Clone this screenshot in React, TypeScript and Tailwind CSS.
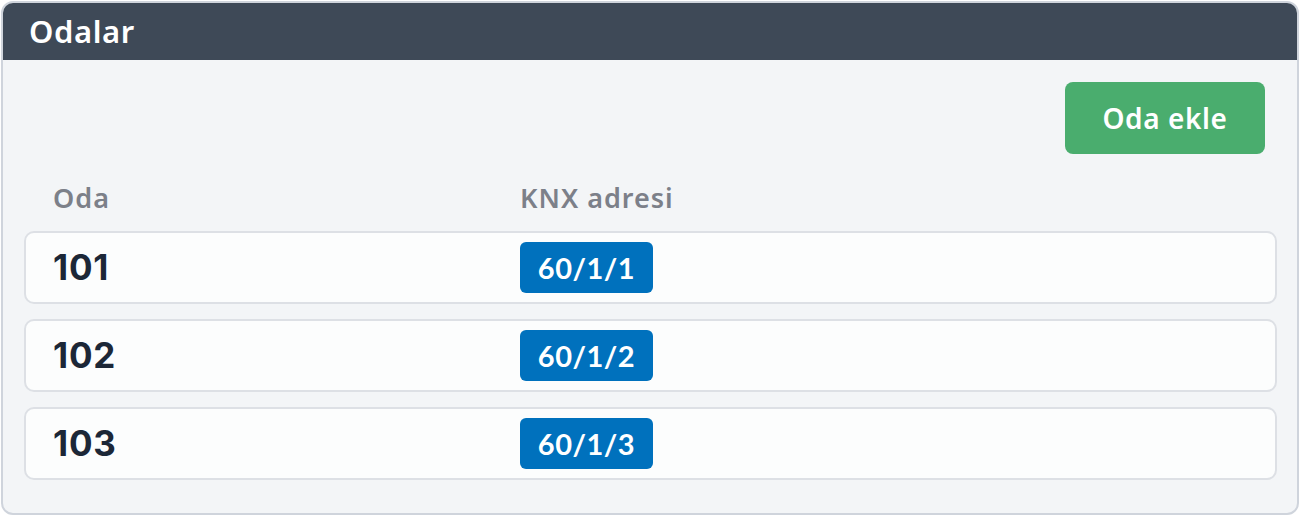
const rooms = [
  { name: "101", knx: "60/1/1" },
  { name: "102", knx: "60/1/2" },
  { name: "103", knx: "60/1/3" },
];

const App = () => {
  return (
    <div className="w-[1300px] h-[516px] p-px bg-white" style={{ fontFamily: "'Noto Sans', sans-serif" }}>
      <div className="h-[514px] rounded-[12px] border-2 border-[#cfd4dc] bg-[#f3f5f7] overflow-hidden flex flex-col">
        {/* Panel header */}
        <div className="h-[57px] shrink-0 bg-[#3e4957] flex items-center px-[26px]">
          <h2 className="text-white text-[31px] font-semibold tracking-[0.6px]">Odalar</h2>
        </div>

        <div className="flex-1 pl-[21px] pr-[20px] pt-[22px]">
          <div className="flex justify-end pr-[12px]">
            <button className="w-[200px] h-[72px] rounded-[8px] bg-[#4aad6e] text-white text-[28px] font-semibold tracking-[0.6px]">
              Oda ekle
            </button>
          </div>

          {/* Column labels */}
          <div className="grid grid-cols-[467px_1fr] px-[29px] mt-[24px] h-[40px] items-center text-[27px] font-semibold tracking-[1px] text-[#7c8089]">
            <span>Oda</span>
            <span>KNX adresi</span>
          </div>

          <div className="flex flex-col gap-[15px] mt-[13px]">
            {rooms.map((room) => (
              <div
                key={room.name}
                className="h-[73px] rounded-[10px] border-2 border-[#dde0e5] bg-[#fcfdfd] grid grid-cols-[467px_1fr] items-center px-[27px]"
              >
                <span className="text-[35px] font-bold text-[#1c2737] tracking-[0.8px]" style={{ fontFamily: "Inter, sans-serif" }}>
                  {room.name}
                </span>
                <div>
                  <span
                    className="inline-flex items-center justify-center w-[133px] h-[51px] rounded-[6px] bg-[#0071bd] text-white text-[29px] font-bold tracking-[0.5px]"
                    style={{ fontFamily: "Lato, sans-serif" }}
                  >
                    {room.knx}
                  </span>
                </div>
              </div>
            ))}
          </div>
        </div>
      </div>
    </div>
  );
};

export default App;
